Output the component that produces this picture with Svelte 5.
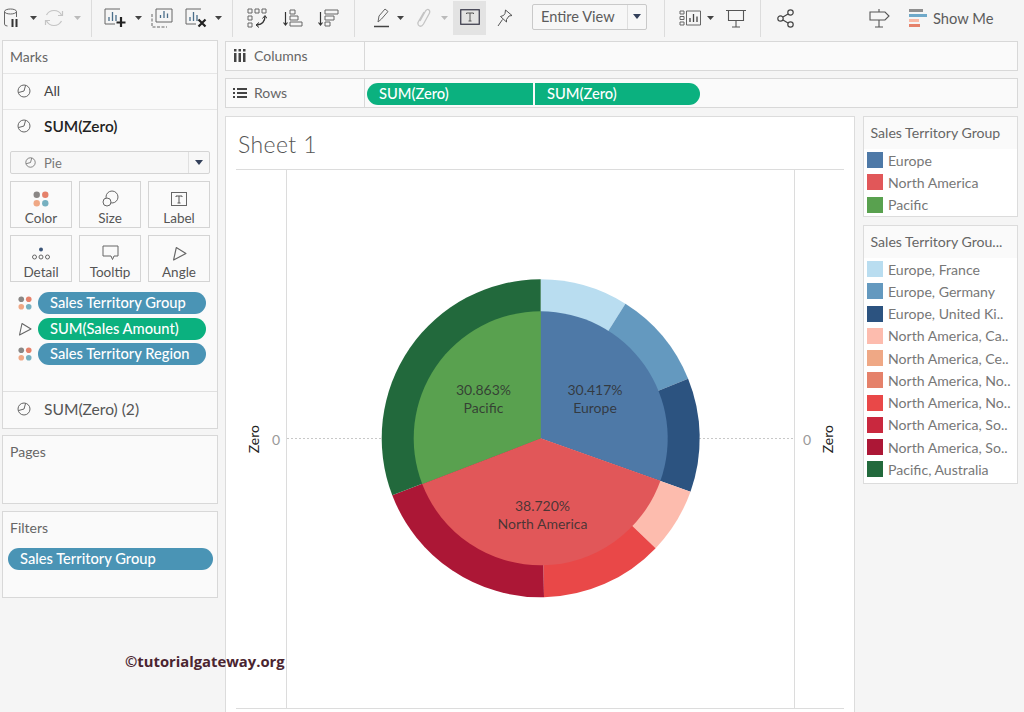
<script>
  const cx = 253.7, cy = 268.3, R = 159, r = 127;
  function pt(rad, deg) {
    const a = (deg * Math.PI) / 180;
    return [cx + rad * Math.sin(a), cy - rad * Math.cos(a)];
  }
  function wedge(rad, a, b) {
    const [x1, y1] = pt(rad, a), [x2, y2] = pt(rad, b);
    return `M${cx} ${cy}L${x1} ${y1}A${rad} ${rad} 0 ${b - a > 180 ? 1 : 0} 1 ${x2} ${y2}Z`;
  }
  const outer = [
    [0, 32.2, '#b9ddf0'], [32.2, 68, '#6499bf'], [68, 109.6, '#2c5380'],
    [109.6, 133.7, '#fdbcae'], [133.7, 178.8, '#e94848'], [178.8, 249, '#ac1736'], [249, 360, '#22693c']
  ];
  const inner = [[0, 109.5, '#4e79a7'], [109.5, 248.9, '#e15759'], [248.9, 360, '#59a14f']];
  const labels = [
    [196.5, 221, '30.863%'], [196.5, 239.5, 'Pacific'],
    [308, 221, '30.417%'], [308, 239.5, 'Europe'],
    [255.5, 337, '38.720%'], [255.5, 355.5, 'North America']
  ];
  const legendA = [['Europe', '#4e79a7'], ['North America', '#e15759'], ['Pacific', '#59a14f']];
  const legendB = [
    ['Europe, France', '#b9ddf0'], ['Europe, Germany', '#6499bf'], ['Europe, United Ki..', '#2c5380'],
    ['North America, Ca..', '#fdbcae'], ['North America, Ce..', '#efa885'], ['North America, No..', '#e5816a'],
    ['North America, No..', '#e94848'], ['North America, So..', '#c9283e'], ['North America, So..', '#ac1736'],
    ['Pacific, Australia', '#22693c']
  ];
</script>

{#snippet caret(dim)}
  <svg class="caret" class:dim width="7" height="4" viewBox="0 0 7 4"><path d="M0 0h7L3.5 4z" /></svg>
{/snippet}
{#snippet pie(size)}
  <svg width={size} height={size} viewBox="0 0 14 14" fill="none" stroke="#666" stroke-width="1"><circle cx="7" cy="7" r="6" /><path d="M7 7 8.6 1.3M7 7 1.4 8.6" /></svg>
{/snippet}
{#snippet dots(size)}
  <svg width={size} height={size} viewBox="0 0 15 15"><circle cx="3.5" cy="3.5" r="3" fill="#8a8785" /><circle cx="11.5" cy="3.5" r="3" fill="#e5816a" /><circle cx="3.5" cy="11.5" r="3" fill="#efa885" /><circle cx="11.5" cy="11.5" r="3" fill="#76b0c0" /></svg>
{/snippet}
{#snippet angle(size)}
  <svg width={size} height={size} viewBox="0 0 14 14" fill="none" stroke="#666" stroke-width="1.1"><path d="M4 1.5 13 7 1.5 13z" stroke-linejoin="round" /></svg>
{/snippet}
{#snippet legend(title, rows, cls)}
  <section class="legend {cls}">
    <h3>{title}</h3>
    <ul>
      {#each rows as row}
        <li><i style:background={row[1]}></i><span>{row[0]}</span></li>
      {/each}
    </ul>
  </section>
{/snippet}

<div class="page">
  <header class="toolbar">
    <div class="group g1">
      <svg class="db" width="16" height="20" viewBox="0 0 16 20" fill="none" stroke="#666"><ellipse cx="7.5" cy="3.5" rx="6" ry="2.5" /><path d="M1.5 3.5V16q0 2 3 2M13.5 3.5V9" /><path d="M9.5 11v8M13.5 11v8" stroke="#333" stroke-width="2" /></svg>
      <span class="cell c1">{@render caret(false)}</span>
      <svg class="refresh" width="20" height="20" viewBox="0 0 20 20" fill="none" stroke="#c4c4c4" stroke-width="1.2"><path d="M2.5 7a8.500 8.500 0 0 1 15 0M17.500 13a8.500 8.500 0 0 1-15 0" /><path d="M18.500 3v4.500H14M1.500 17v-4.500H6" /></svg>
      <span class="cell c2">{@render caret(true)}</span>
    </div>
    <div class="group g2">
      <svg width="22" height="21" viewBox="0 0 22 21" fill="none" stroke="#666"><path d="M16 1H1v15h10" /><path d="M5 13V9M8.500 13V4M12 13V7" stroke="#4a6e8a" stroke-width="1.300" /><path d="M17 9v10M12.500 14.500h9" stroke="#222" stroke-width="2.200" /></svg>
      <span class="cell c3">{@render caret(false)}</span>
      <svg width="22" height="20" viewBox="0 0 22 20" fill="none" stroke="#666"><path d="M5 1h16v13H5z" /><path d="M9.500 10V7M13 10V3M16.500 10V5.500" stroke="#4a6e8a" stroke-width="1.300" /><path d="M1 6v13h15" stroke-dasharray="3 1.500" /></svg>
      <svg class="ml12" width="22" height="21" viewBox="0 0 22 21" fill="none" stroke="#666"><path d="M16 1H1v15h10" /><path d="M5 13V9M8.500 13V4M12 13V7" stroke="#4a6e8a" stroke-width="1.300" /><path d="M13.500 11.500l7 7M20.500 11.500l-7 7" stroke="#222" stroke-width="2.200" /></svg>
      <span class="cell c3b">{@render caret(false)}</span>
    </div>
    <div class="group g3">
      <svg width="20" height="20" viewBox="0 0 20 20" fill="none" stroke="#666"><path d="M1 1h4v4H1zM8 1h4v4H8zM15 1h4v4h-4zM1 8h4v4H1zM1 15h4v4H1z" /><path d="M18 8q0 8-8 9" stroke="#333" stroke-width="1.300" /><path d="M15.500 10.500 18 7.500l2 3M12 14.500 9 17l3 2.500" stroke="#333" /></svg>
      <svg class="ml16" width="20" height="18" viewBox="0 0 20 18" fill="none" stroke="#666"><path d="M2.500 3v13M.5 13.500l2 2.500 2-2.500" stroke="#333" stroke-width="1.200" /><path d="M7 1h5v4H7zM7 7h8v4H7zM7 13h12v4H7z" /></svg>
      <svg class="ml15" width="21" height="18" viewBox="0 0 21 18" fill="none" stroke="#666"><path d="M2.500 3v13M.5 13.500l2 2.500 2-2.500" stroke="#333" stroke-width="1.200" /><path d="M7 1h13v4H7zM7 7h9v4H7zM7 13h5v4H7z" /></svg>
    </div>
    <div class="group g4">
      <svg width="18" height="20" viewBox="0 0 18 20" fill="none" stroke="#666"><path d="M5 14 6 8l6-7 3 2.500-6.500 7.500z" /><path d="M1 18.500h15" stroke="#444" stroke-width="1.500" /></svg>
      <span class="cell c4">{@render caret(false)}</span>
      <svg class="ml8" width="15" height="20" viewBox="0 0 15 20" fill="none" stroke="#c4c4c4" stroke-width="1.300"><path d="M4 13 9.500 3q2-2.500 3.500-1t0 4L7.500 16q-2 3-4 2T2 14.500L8 4" /></svg>
      <span class="cell c5">{@render caret(true)}</span>
      <span class="active">
        <svg width="20" height="16" viewBox="0 0 20 16" fill="none"><rect x=".75" y=".75" width="18.500" height="14.500" stroke="#334" stroke-width="1.200" /><path d="M6.500 5V4h7v1M10 4v8M8.500 12h3" stroke="#555" /></svg>
      </span>
      <svg class="ml11" width="16" height="18" viewBox="0 0 16 18" fill="none" stroke="#555"><path d="M8.500 1 15 6.500l-3 .5-2.500 3.500L9.500 13 3.500 7.500 6.500 6.500 8 4.500z" /><path d="M5.500 10.500 1 17" /></svg>
      <div class="view">
        <span class="view-label">Entire View</span>
        <span class="view-arrow"><svg width="8" height="5" viewBox="0 0 8 5"><path d="M0 0h8L4 5z" fill="#33405a" /></svg></span>
      </div>
    </div>
    <div class="group g5">
      <svg width="22" height="16" viewBox="0 0 22 16" fill="none" stroke="#666"><path d="M1 1h4v3H1zM1 6.500h4v3H1zM1 12h4v3H1zM7.500 1h14v14h-14z" /><path d="M11 12V8M14.500 12V4M18 12V6.500" stroke="#444" stroke-width="1.300" /></svg>
      <span class="cell c6">{@render caret(false)}</span>
      <svg class="ml6" width="20" height="19" viewBox="0 0 20 19" fill="none" stroke="#555"><path d="M0 1.500h20M2.500 1.500v10h15v-10M10 11.500V18M6 18h8" stroke-width="1.100" /></svg>
    </div>
    <div class="group g6">
      <svg width="18" height="19" viewBox="0 0 18 19" fill="none" stroke="#444" stroke-width="1.200"><circle cx="13.500" cy="3.500" r="2.700" /><circle cx="3.500" cy="9.500" r="2.700" /><circle cx="13.500" cy="15.500" r="2.700" /><path d="M6 8 11 5M6 11l5 3" /></svg>
      <svg class="ml74" width="21" height="20" viewBox="0 0 21 20" fill="none" stroke="#555" stroke-width="1.100"><path d="M1 4h15l4 4-4 4H1zM10 1v3M10 12v7M6 19h8" /></svg>
      <svg class="ml19" width="19" height="18" viewBox="0 0 19 18"><rect y="0" width="14" height="3" fill="#8f8f8f" /><rect y="5" width="18" height="3" fill="#6fa9c9" /><rect y="10" width="10" height="3" fill="#f9b9a6" /><rect y="15" width="11" height="3" fill="#e5816a" /></svg>
      <span class="showme">Show Me</span>
    </div>
  </header>

  <div class="main">
    <aside class="left">
      <section class="card marks">
        <h2>Marks</h2>
        <div class="row line">{@render pie(14)}<span>All</span></div>
        <div class="row strong">{@render pie(14)}<span>SUM(Zero)</span></div>
        <div class="body">
          <div class="select">
            <span class="sel-main">{@render pie(11)}<span>Pie</span></span>
            <span class="sel-arrow"><svg width="8" height="5" viewBox="0 0 8 5"><path d="M0 0h8L4 5z" fill="#33405a" /></svg></span>
          </div>
          <div class="btns">
            <div class="btn">{@render dots(16)}<span>Color</span></div>
            <div class="btn"><svg width="17" height="17" viewBox="0 0 17 17" fill="none" stroke="#666"><circle cx="10" cy="7" r="6" /><circle cx="5" cy="12" r="4" fill="#fafafa" /></svg><span>Size</span></div>
            <div class="btn"><svg width="17" height="15" viewBox="0 0 17 15" fill="none"><rect x=".5" y=".5" width="15" height="13" stroke="#666" /><path d="M5 5V4h6v1M8 4v7M6.500 11h3" stroke="#555" /></svg><span>Label</span></div>
            <div class="btn"><svg width="18" height="14" viewBox="0 0 18 14" fill="none" stroke="#666"><circle cx="9" cy="2.500" r="2" fill="#3c5578" stroke="none" /><circle cx="2.500" cy="10" r="2" /><circle cx="9" cy="10" r="2" /><circle cx="15.500" cy="10" r="2" /></svg><span>Detail</span></div>
            <div class="btn"><svg width="17" height="16" viewBox="0 0 17 16" fill="none" stroke="#666"><path d="M1 1h15v10h-4l-1.500 3.500L9 11H1z" /></svg><span>Tooltip</span></div>
            <div class="btn">{@render angle(15)}<span>Angle</span></div>
          </div>
          <div class="pills">
            <div class="pill-row">{@render dots(14)}<span class="pill blue">Sales Territory Group</span></div>
            <div class="pill-row">{@render angle(14)}<span class="pill green">SUM(Sales Amount)</span></div>
            <div class="pill-row">{@render dots(14)}<span class="pill blue">Sales Territory Region</span></div>
          </div>
        </div>
        <div class="row topline">{@render pie(14)}<span>SUM(Zero) (2)</span></div>
      </section>
      <section class="card pages"><h2>Pages</h2></section>
      <section class="card filters">
        <h2>Filters</h2>
        <span class="pill blue wide">Sales Territory Group</span>
      </section>
    </aside>

    <div class="right">
      <div class="shelf">
        <div class="shelf-label cols">
          <svg width="12" height="13" viewBox="0 0 12 13" fill="#444"><path d="M0 4h2.500v9H0zM4.500 4H7v9H4.500zM9 4h2.500v9H9zM0 0h2.500v2.500H0zM4.500 0H7v2.500H4.500zM9 0h2.500v2.500H9z" /></svg>
          <span>Columns</span>
        </div>
      </div>
      <div class="shelf">
        <div class="shelf-label rows">
          <svg width="14" height="10" viewBox="0 0 14 10" fill="#444"><path d="M0 0h2v2H0zM4 0h10v2H4zM0 4h2v2H0zM4 4h10v2H4zM0 8h2v2H0zM4 8h10v2H4z" /></svg>
          <span>Rows</span>
        </div>
        <div class="shelf-pills">
          <span class="pill green left-pill">SUM(Zero)</span>
          <span class="pill green right-pill">SUM(Zero)</span>
        </div>
      </div>
      <div class="content">
        <section class="sheet">
          <h1>Sheet 1</h1>
          <div class="viz">
            <div class="axis axis-left"><b>Zero</b><em>0</em></div>
            <div class="pane">
              <svg class="chart" width="507" height="538" viewBox="0 0 507 538">
                <line x1="0" y1="268.500" x2="507" y2="268.500" stroke="#c8c8c8" stroke-dasharray="2 2" />
                {#each outer as [a, b, c]}
                  <path d={wedge(R, a, b)} fill={c} />
                {/each}
                {#each inner as [a, b, c]}
                  <path d={wedge(r, a, b)} fill={c} />
                {/each}
                {#each labels as [x, y, t]}
                  <text {x} {y} text-anchor="middle" dominant-baseline="middle">{t}</text>
                {/each}
              </svg>
            </div>
            <div class="axis axis-right"><em>0</em><b>Zero</b></div>
          </div>
        </section>
        <div class="legends">
          {@render legend('Sales Territory Group', legendA, 'short')}
          {@render legend('Sales Territory Grou...', legendB, 'long')}
        </div>
      </div>
    </div>
  </div>
  <div class="watermark">©tutorialgateway.org</div>
</div>

<style>
  :global(body) { margin: 0; background: #f5f5f5; }
  * { box-sizing: border-box; }
  .page { position: relative; width: 1024px; height: 712px; overflow: hidden; background: #f5f5f5; font: 14px Lato, sans-serif; color: #555; }

  .toolbar { display: flex; height: 40px; }
  .group { display: flex; align-items: center; height: 37px; border-right: 1px solid #dcdcdc; flex: none; padding-bottom: 1px; }
  .g1 { width: 92px; padding-left: 3px; }
  .g2 { width: 141px; padding-left: 12px; }
  .g3 { width: 122px; padding-left: 14px; }
  .g4 { width: 310px; padding-left: 18px; }
  .g5 { width: 96px; padding-left: 14px; }
  .g6 { flex: 1; border-right: none; padding-left: 16px; }
  .cell { display: flex; justify-content: center; flex: none; }
  .c1 { width: 28px; }
  .refresh { margin-left: -3px; }
  .c2 { width: 27px; }
  .c3 { width: 25px; }
  .c3b { width: 23px; }
  .c4 { width: 19px; }
  .c5 { width: 26px; }
  .c6 { width: 18px; }
  .caret path { fill: #444; }
  .caret.dim path { fill: #bbb; }
  .ml6 { margin-left: 7px; }
  .ml8 { margin-left: 6px; }
  .ml11 { margin-left: 11px; }
  .ml12 { margin-left: 12px; }
  .ml15 { margin-left: 15px; }
  .ml16 { margin-left: 16px; }
  .ml19 { margin-left: 19px; }
  .ml74 { margin-left: 74px; }
  .active { display: flex; align-items: center; justify-content: center; width: 33px; height: 34px; margin-left: -4px; margin-top: -1px; background: #e3e3e3; }
  .active svg { margin-top: -1px; }
  .view { display: flex; width: 115px; height: 26px; margin-left: 19px; margin-top: -3px; background: #f7f7f7; border: 1px solid #c9c9c9; border-radius: 2px; }
  .view-label { width: 95px; padding-left: 8px; line-height: 24px; font-size: 14.600px; color: #5c5c5c; border-right: 1px solid #dedede; }
  .view-arrow { flex: 1; display: flex; align-items: center; justify-content: center; }
  .showme { margin-left: 5px; font-size: 14.700px; color: #5c5c5c; }

  .main { display: flex; height: 672px; }
  .left { width: 216px; margin-left: 2px; display: flex; flex-direction: column; flex: none; }
  .card { background: #fafafa; border: 1px solid #d8d8d8; }
  .card h2 { margin: 0; font-size: 14px; font-weight: 400; color: #666; }
  .marks { display: flex; flex-direction: column; height: 389px; }
  .marks h2 { height: 33px; line-height: 31px; padding-left: 7px; border-bottom: 1px solid #e6e6e6; }
  .row { display: flex; align-items: center; height: 36px; padding-left: 14px; padding-bottom: 2px; gap: 13px; font-size: 14px; color: #444; flex: none; }
  .line { border-bottom: 1px solid #e6e6e6; }
  .strong { color: #222; font-weight: 600; font-size: 15.400px; padding-bottom: 4px; }
  .topline { margin-top: auto; border-top: 1px solid #e0e0e0; height: 37px; color: #555; font-size: 15.600px; }
  .body { padding: 5px 7px 0; }
  .select { display: flex; height: 23px; background: #f7f7f7; border: 1px solid #d4d4d4; border-radius: 2px; font-size: 13px; color: #777; }
  .sel-main { flex: 1; display: flex; align-items: center; gap: 8px; padding-left: 14px; border-right: 1px solid #e0e0e0; }
  .sel-arrow { width: 20px; display: flex; align-items: center; justify-content: center; }
  .btns { display: grid; grid-template-columns: repeat(3, 62px); grid-auto-rows: 47px; gap: 7px; margin-top: 7px; }
  .btn { display: flex; flex-direction: column; align-items: center; justify-content: flex-end; gap: 3px; padding-bottom: 1px; background: #fafafa; border: 1px solid #d4d4d4; font-size: 13.500px; color: #555; }
  .pills { display: flex; flex-direction: column; gap: 3.500px; margin-top: 10px; }
  .pill-row { display: flex; align-items: center; gap: 6px; padding-left: 8px; }
  .pill { display: block; height: 22px; line-height: 20px; border-radius: 11px; color: #fff; font-size: 14.700px; font-weight: 500; padding-left: 12px; white-space: nowrap; flex: none; }
  .pill-row .pill { width: 168px; }
  .blue { background: #4a94b5; }
  .green { background: #0bb17f; }
  .pages { height: 69px; margin-top: 6px; }
  .pages h2, .filters h2 { padding: 7px 0 0 7px; line-height: 17px; }
  .filters { height: 87px; margin-top: 7px; }
  .wide { width: 205px; margin: 12px 0 0 5px; }

  .right { width: 793px; margin-left: 7px; margin-top: 1px; flex: none; display: flex; flex-direction: column; }
  .shelf { display: flex; height: 30px; margin-bottom: 7px; background: #fafafa; border: 1px solid #d8d8d8; }
  .shelf-label { display: flex; align-items: center; gap: 8px; width: 139px; padding-left: 8px; border-right: 1px solid #d8d8d8; color: #666; font-size: 14px; flex: none; }
  .cols { padding-bottom: 2px; }
  .rows { padding-left: 7px; gap: 7px; padding-bottom: 1px; }
  .shelf-pills { display: flex; gap: 2px; padding: 4px 0 0 2px; }
  .left-pill { width: 166px; border-radius: 11px 0 0 11px; }
  .right-pill { width: 165px; border-radius: 0 11px 11px 0; }
  .content { display: flex; gap: 8px; margin-top: 1px; flex: 1; min-height: 0; }
  .sheet { width: 630px; flex: none; padding: 0 10px 0 10px; background: #fff; border: 1px solid #dcdcdc; border-bottom: none; display: flex; flex-direction: column; }
  h1 { margin: 0; height: 53px; padding: 12px 0 0 2px; font-size: 23px; line-height: 30px; font-weight: 300; color: #555; letter-spacing: .4px; border-bottom: 1px solid #dcdcdc; }
  .viz { display: flex; height: 539px; border-bottom: 1px solid #dcdcdc; }
  .axis { width: 50px; display: flex; align-items: center; flex: none; }
  .axis b { writing-mode: vertical-rl; transform: rotate(180deg); font-size: 14px; font-weight: 400; color: #222; }
  .axis em { font-style: normal; font-size: 14px; color: #999; }
  .axis-left b { margin-left: 9px; }
  .axis-left em { margin-left: 10px; }
  .axis-right em { margin-left: 8px; }
  .axis-right b { margin-left: 8px; }
  .pane { width: 509px; flex: none; border-left: 1px solid #dcdcdc; border-right: 1px solid #dcdcdc; }
  .chart { display: block; }
  .chart text { font: 14px Lato, sans-serif; fill: #2f2f2f; fill-opacity: .85; }

  .legends { width: 155px; flex: none; display: flex; flex-direction: column; gap: 8px; }
  .legend { background: #fff; border: 1px solid #dcdcdc; }
  .legend h3 { margin: 0; height: 32px; line-height: 31px; padding-left: 6.500px; font-size: 14.100px; font-weight: 400; color: #666; background: #fafafa; white-space: nowrap; }
  .legend ul { margin: 0; padding: 0; list-style: none; }
  .legend li { display: flex; align-items: center; gap: 5px; height: 22.250px; padding-left: 3px; font-size: 14.100px; color: #777; white-space: nowrap; }
  .legend li i { width: 16px; height: 16px; flex: none; }
  .short { height: 101px; }
  .long { height: 259px; }

  .watermark { position: absolute; left: 125px; top: 651px; font: 700 14.800px "Open Sans", sans-serif; color: #4a2530; white-space: nowrap; }
</style>
